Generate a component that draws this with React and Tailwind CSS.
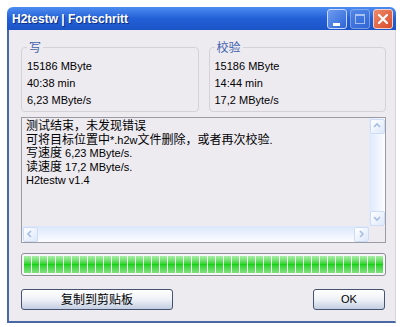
import React from "react";

const CJK = /([\u3000-\u9fff\uff00-\uffef]+)/;

function Mixed({ text }) {
  const parts = text.split(CJK);
  return (
    <>
      {parts.map((p, i) =>
        CJK.test(p) ? (
          <span key={i} className="text-[12px]">{p}</span>
        ) : (
          <span key={i}>{p}</span>
        )
      )}
    </>
  );
}

function Chevron({ dir }) {
  const pts = {
    up: "2,6 5,3 8,6",
    down: "2,4 5,7 8,4",
    left: "6,2 3,5 6,8",
    right: "4,2 7,5 4,8",
  }[dir];
  return (
    <svg width="10" height="10" viewBox="0 0 10 10">
      <polyline points={pts} fill="none" stroke="#a6bde3" strokeWidth="1.6" />
    </svg>
  );
}

function ScrollBtn({ dir }) {
  return (
    <div className="w-[15px] h-[15px] m-[0.5px] rounded-[2px] border border-[#cfdcf5] bg-gradient-to-br from-[#ffffff] to-[#dde8fb] flex items-center justify-center shrink-0">
      <Chevron dir={dir} />
    </div>
  );
}

function GroupBox({ title, lines }) {
  return (
    <div className="relative flex-1 h-[65px] border border-[#d4d1d9] rounded-[4px] pt-[10px] pl-[5px] text-[11px] leading-[17px] text-black">
      <div className="absolute left-[5px] top-[-6px] px-[2px] bg-[#edeaf0] text-[12px] leading-[12px] text-[#4063ad]">
        {title}
      </div>
      {lines.map((l, i) => (
        <div key={i}>{l}</div>
      ))}
    </div>
  );
}

export default function App() {
  const segs = Array.from({ length: 45 });
  const lines = [
    "测试结束，未发现错误",
    "可将目标位置中*.h2w文件删除，或者再次校验.",
    "写速度 6,23 MByte/s.",
    "读速度 17,2 MByte/s.",
    "H2testw v1.4",
  ];
  return (
    <div className="w-[415px] h-[327px] bg-white pt-[7px] pl-[7px] font-['Liberation_Sans','Noto_Sans_CJK_SC',sans-serif]">
      <div className="w-[389px] flex flex-col">
        {/* Title bar */}
        <div className="h-[23px] rounded-t-[6px] bg-gradient-to-b from-[#4d8cf2] via-[#235fd6] to-[#1b54c7] flex items-center justify-between pl-[5px] pr-[3px]">
          <div className="text-white font-bold text-[12px] leading-[16px] [text-shadow:1px_1px_0_#0b2f86]">
            H2testw | Fortschritt
          </div>
          <div className="flex gap-[3px] items-center">
            <div className="w-[20px] h-[20px] rounded-[3px] border border-[#c9d8f6] bg-gradient-to-br from-[#6f9cf0] to-[#2d64d6] relative">
              <div className="absolute left-[5px] top-[13px] w-[7px] h-[3px] bg-white" />
            </div>
            <div className="w-[20px] h-[20px] rounded-[3px] border border-[#9fb8ec] bg-gradient-to-br from-[#5d8ce8] to-[#3a6fdb] opacity-70 relative">
              <div className="absolute left-[4px] top-[4px] w-[10px] h-[10px] border border-[#dfe8fb] border-t-2" />
            </div>
            <div className="w-[20px] h-[20px] rounded-[3px] border border-[#f2d0c6] bg-gradient-to-br from-[#ec8a6a] to-[#d8492a] flex items-center justify-center">
              <svg width="12" height="12" viewBox="0 0 12 12">
                <path d="M2 2 L10 10 M10 2 L2 10" stroke="white" strokeWidth="2.2" strokeLinecap="round" />
              </svg>
            </div>
          </div>
        </div>
        {/* Body */}
        <div className="h-[293px] bg-[#edeaf0] border-l-2 border-b-2 border-[#4a67a6] border-r border-r-[#d9d6de] pl-[12px] pr-[9px] pt-[17px] flex flex-col">
          <div className="flex gap-[10px]">
            <GroupBox title="写" lines={["15186 MByte", "40:38 min", "6,23 MByte/s"]} />
            <GroupBox title="校验" lines={["15186 MByte", "14:44 min", "17,2 MByte/s"]} />
          </div>
          {/* Text box */}
          <div className="mt-[5px] h-[126px] border border-[#9c9aa4] flex flex-col">
            <div className="flex flex-1 min-h-0">
              <div className="flex-1 pl-[4px] pt-[2px] text-[11px] leading-[13.5px] text-black whitespace-nowrap overflow-hidden">
                {lines.map((l, i) => (
                  <div key={i} className="h-[13.5px]">
                    <Mixed text={l} />
                  </div>
                ))}
              </div>
              <div className="w-[16px] flex flex-col bg-gradient-to-r from-[#dfe9fb] to-[#fbfcff]">
                <ScrollBtn dir="up" />
                <div className="flex-1" />
                <ScrollBtn dir="down" />
              </div>
            </div>
            <div className="h-[16px] flex">
              <div className="flex-1 flex bg-gradient-to-b from-[#dce7fb] to-[#fbfcff]">
                <ScrollBtn dir="left" />
                <div className="flex-1" />
                <ScrollBtn dir="right" />
              </div>
              <div className="w-[16px] bg-[#edeaf0]" />
            </div>
          </div>
          {/* Progress bar */}
          <div className="mt-[10px] h-[23px] border border-[#8e8c96] rounded-[3px] bg-[#f7f7f7] p-[2px] flex gap-px">
            {segs.map((_, i) => (
              <div
                key={i}
                className="w-[7px] h-full bg-gradient-to-b from-[#a8eea8] via-[#16d316] to-[#7fe07f]"
              />
            ))}
          </div>
          {/* Buttons */}
          <div className="mt-[13px] flex justify-between pr-[1px]">
            <div className="w-[152px] h-[21px] rounded-[3px] border border-[#45536e] bg-gradient-to-b from-[#ffffff] via-[#eef1f7] to-[#c3cee2] flex items-center justify-center text-[12px] text-black">
              复制到剪贴板
            </div>
            <div className="w-[72px] h-[21px] rounded-[3px] border border-[#45536e] bg-gradient-to-b from-[#ffffff] via-[#eef1f7] to-[#c3cee2] flex items-center justify-center text-[11px] text-black">
              OK
            </div>
          </div>
        </div>
      </div>
    </div>
  );
}
